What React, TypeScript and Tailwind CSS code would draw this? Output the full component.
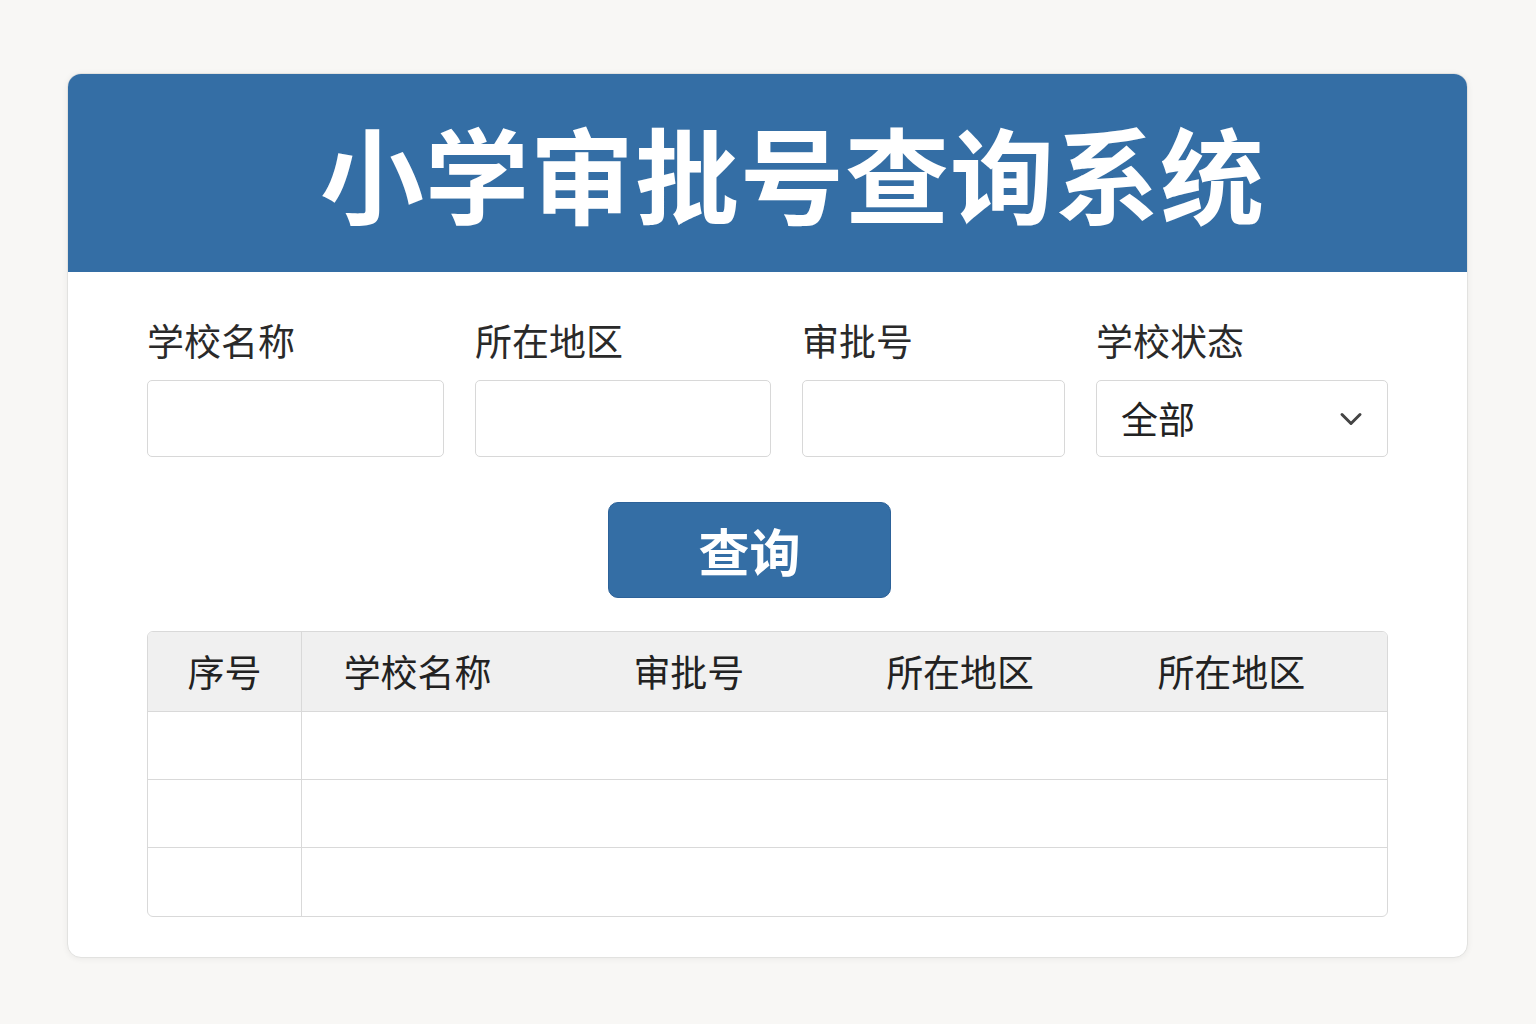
import { ChevronDown } from 'lucide-react';

const FONT = { fontFamily: '"Noto Sans CJK SC", "Noto Sans", sans-serif' };

const fields = [
  { label: '学校名称', width: 'w-[297px]' },
  { label: '所在地区', width: 'w-[296px]' },
  { label: '审批号', width: 'w-[263px]' },
];

const columns = ['学校名称', '审批号', '所在地区', '所在地区'];

function Field({ label, width }: { label: string; width: string }) {
  return (
    <div className={`flex flex-col gap-[18px] ${width}`}>
      <label className="text-[37px] leading-[44px] text-[#2a2a2a]">{label}</label>
      <input
        type="text"
        className="h-[77px] w-full rounded-[5px] border border-[#d8d8d8] bg-white px-5 text-[34px] outline-none"
      />
    </div>
  );
}

export default function App() {
  return (
    <div className="min-h-screen bg-[#f8f7f5] pt-[73px]" style={FONT}>
      <div className="ml-[67px] w-[1401px] overflow-hidden rounded-[14px] border border-[#e2e2e0] bg-white shadow-[0_1px_6px_rgba(0,0,0,0.06)]">
        <header className="flex h-[198px] items-center justify-center bg-[#346ea5] pb-[2px] pl-[50px]">
          <h1 className="text-[104px] font-bold leading-none tracking-[1px] text-white">小学审批号查询系统</h1>
        </header>

        <div className="px-[79px] pb-[40px] pt-[46px]">
          <div className="flex justify-between">
            {fields.map((f) => (
              <Field key={f.label} {...f} />
            ))}
            <div className="flex w-[292px] flex-col gap-[18px]">
              <label className="text-[37px] leading-[44px] text-[#2a2a2a]">学校状态</label>
              <div className="flex h-[77px] items-center justify-between rounded-[5px] border border-[#d8d8d8] bg-white pl-6 pr-[18px]">
                <span className="text-[37px] text-[#222]">全部</span>
                <ChevronDown className="h-9 w-9 text-[#444]" strokeWidth={2} />
              </div>
            </div>
          </div>

          <div className="mt-[45px] flex justify-center pr-[36px]">
            <button
              type="button"
              className="h-[96px] w-[283px] rounded-[10px] border border-[#2d6299] bg-[#346ea5] text-[51px] font-bold text-white"
            >
              查询
            </button>
          </div>

          <div className="mt-[33px] overflow-hidden rounded-[6px] border border-[#d9d9d9]">
            <div className="flex h-[80px] border-b border-[#d9d9d9] bg-[#f0f0f0] text-[37px] text-[#222]">
              <div className="flex w-[154px] items-center justify-center border-r border-[#d9d9d9]">序号</div>
              {columns.map((c, i) => (
                <div key={i} className="flex flex-1 items-center justify-center pr-10">
                  {c}
                </div>
              ))}
            </div>
            {[0, 1, 2].map((r) => (
              <div key={r} className={`flex h-[68px] ${r < 2 ? 'border-b border-[#d9d9d9]' : ''}`}>
                <div className="w-[154px] border-r border-[#d9d9d9]" />
                <div className="flex-1" />
              </div>
            ))}
          </div>
        </div>
      </div>
    </div>
  );
}
